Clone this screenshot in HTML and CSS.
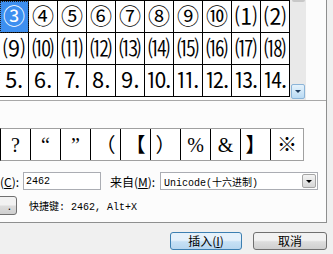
FILE: index.html
```html
<!DOCTYPE html>
<html lang="zh-CN">
<head>
    <meta charset="UTF-8">
    <title>符号</title>
    <link rel="stylesheet" href="styles.css">
</head>
<body>
    <div class="dialog">
        <div class="page">
            <div class="chars">
                <div class="grid">
                    <div class="cell selected">③</div>
                    <div class="cell">④</div>
                    <div class="cell">⑤</div>
                    <div class="cell">⑥</div>
                    <div class="cell">⑦</div>
                    <div class="cell">⑧</div>
                    <div class="cell">⑨</div>
                    <div class="cell">⑩</div>
                    <div class="cell">⑴</div>
                    <div class="cell">⑵</div>
                    <div class="cell">⑼</div>
                    <div class="cell">⑽</div>
                    <div class="cell">⑾</div>
                    <div class="cell">⑿</div>
                    <div class="cell">⒀</div>
                    <div class="cell">⒁</div>
                    <div class="cell">⒂</div>
                    <div class="cell">⒃</div>
                    <div class="cell">⒄</div>
                    <div class="cell">⒅</div>
                    <div class="cell">⒌</div>
                    <div class="cell">⒍</div>
                    <div class="cell">⒎</div>
                    <div class="cell">⒏</div>
                    <div class="cell">⒐</div>
                    <div class="cell">⒑</div>
                    <div class="cell">⒒</div>
                    <div class="cell">⒓</div>
                    <div class="cell">⒔</div>
                    <div class="cell">⒕</div>
                </div>
                <div class="vscroll">
                    <div class="thumb-end"></div>
                    <div class="arrow-down"><span class="tri"></span></div>
                </div>
            </div>

            <div class="recent">
                <div class="rcell">?</div>
                <div class="rcell">“</div>
                <div class="rcell">”</div>
                <div class="rcell">（</div>
                <div class="rcell">【</div>
                <div class="rcell">）</div>
                <div class="rcell">%</div>
                <div class="rcell">&amp;</div>
                <div class="rcell">】</div>
                <div class="rcell">※</div>
            </div>

            <div class="form-row code-row">
                <label class="lbl lbl-code" for="code">(<u>C</u>):</label>
                <input class="code-input" id="code" type="text" value="2462">
                <label class="lbl lbl-from">来自(<u>M</u>):</label>
                <div class="select">
                    <span class="select-text">Unicode(十六进制)</span>
                    <span class="drop"><span class="tri"></span></span>
                </div>
            </div>

            <div class="form-row key-row">
                <button class="btn-cut">.</button>
                <span class="shortcut">快捷键: 2462, Alt+X</span>
            </div>
        </div>

        <div class="footer">
            <button class="btn default">插入(<u>I</u>)</button>
            <button class="btn">取消</button>
        </div>
    </div>
</body>
</html>
```

FILE: styles.css
```css
html, body {
    margin: 0;
    padding: 0;
}
body {
    width: 333px;
    height: 254px;
    overflow: hidden;
    background-color: #f0f0f0;
    font-family: "Noto Sans CJK SC", sans-serif;
    font-size: 12px;
    color: #000;
}
.dialog {
    display: flex;
    flex-direction: column;
    height: 254px;
}
.page {
    width: 326px;
    height: 222px;
    background-color: #fcfcfc;
    border-right: 1px solid #8e8f8f;
    border-bottom: 1px solid #8e8f8f;
}

/* symbol grid */
.chars {
    display: flex;
    height: 100px;
    border-bottom: 1px solid #a8a8a8;
}
.grid {
    display: grid;
    grid-template-columns: repeat(10, 29px);
    grid-auto-rows: 32px;
    border-top: 1px solid #000;
    background-color: #fff;
}
.cell {
    border-right: 1px solid #000;
    border-bottom: 1px solid #000;
    display: flex;
    align-items: center;
    justify-content: center;
    font-family: "Liberation Serif", "Noto Sans CJK SC", serif;
    font-size: 22px;
    line-height: 1;
}
.cell.selected {
    background-color: #3d8ff0;
    color: #fff;
    outline: 1px dotted #222;
    outline-offset: -1px;
}
.vscroll {
    width: 16px;
    background-color: #e9e9e9;
    display: flex;
    flex-direction: column;
    align-items: center;
}
.thumb-end {
    width: 13px;
    height: 2px;
    background-color: #c8c8c8;
    border-radius: 0 0 2px 2px;
}
.arrow-down {
    margin-top: auto;
    margin-bottom: 1px;
    width: 12px;
    height: 13px;
    border: 1px solid #8bb4d8;
    border-radius: 2px;
    background: linear-gradient(#e6f3fc, #b9daf3);
    display: flex;
    align-items: center;
    justify-content: center;
}
.tri {
    width: 0;
    height: 0;
    border-left: 3px solid transparent;
    border-right: 3px solid transparent;
    border-top: 3px solid #1f3a5a;
}

/* recently used */
.recent {
    display: flex;
    width: 302px;
    margin-top: 27px;
    border: 1px solid #a0a0a0;
    border-left-color: #000;
    background-color: #fff;
}
.rcell {
    width: 29px;
    height: 31px;
    border-right: 1px solid #000;
    display: flex;
    align-items: center;
    justify-content: center;
    font-family: "Liberation Serif", "Noto Sans CJK SC", serif;
    font-size: 20px;
    line-height: 1;
}
.rcell:last-child {
    border-right: none;
    width: 32px;
}

/* code fields */
.form-row {
    display: flex;
    align-items: center;
}
.code-row {
    margin-top: 11px;
    height: 18px;
}
.lbl {
    white-space: nowrap;
}
.lbl-code {
    width: 23px;
}
.lbl-from {
    margin-left: 9px;
    width: 50px;
}
.code-input {
    box-sizing: border-box;
    width: 78px;
    height: 18px;
    margin: 0;
    padding: 0 2px;
    border: 1px solid #abadb3;
    background-color: #fff;
    font-family: "Liberation Mono", "Noto Sans CJK SC", monospace;
    font-size: 10px;
    color: #000;
}
.select {
    box-sizing: border-box;
    width: 158px;
    height: 18px;
    border: 1px solid #abadb3;
    background-color: #fff;
    display: flex;
    align-items: center;
    padding-left: 3px;
}
.select-text {
    flex: 1;
    font-family: "Liberation Mono", "Noto Sans CJK SC", monospace;
    font-size: 10px;
}
.drop {
    width: 14px;
    height: 14px;
    margin-right: 1px;
    border: 1px solid #a5a5a5;
    border-radius: 2px;
    box-sizing: border-box;
    background: linear-gradient(#f4f4f4, #d6d6d6);
    display: flex;
    align-items: center;
    justify-content: center;
}
.drop .tri {
    border-top-color: #000;
}
.key-row {
    margin-top: 6px;
    height: 19px;
}
.btn-cut {
    box-sizing: border-box;
    width: 18px;
    height: 19px;
    margin: 0 0 0 -1px;
    padding: 0 5px 0 0;
    border: 1px solid #707070;
    border-radius: 0 3px 3px 0;
    background: linear-gradient(#f2f2f2 45%, #dcdcdc 55%, #cfcfcf);
    font-size: 12px;
    text-align: right;
}
.shortcut {
    margin-left: 12px;
    font-family: "Liberation Mono", "Noto Sans CJK SC", monospace;
    font-size: 10px;
}

/* buttons */
.footer {
    display: flex;
    justify-content: flex-end;
    gap: 11px;
    padding: 9px 6px 0 0;
}
.btn {
    box-sizing: border-box;
    width: 74px;
    height: 18px;
    margin: 0;
    padding: 0;
    border: 1px solid #707070;
    border-radius: 3px;
    background: linear-gradient(#f2f2f2 45%, #dddddd 55%, #cfcfcf);
    font-family: "Noto Sans CJK SC", sans-serif;
    font-size: 12px;
    line-height: 16px;
    color: #000;
}
.btn.default {
    width: 72px;
    border-color: #3c7fb1;
    background: linear-gradient(#e5f1fb 45%, #c6e0f5 55%, #b7d6ef);
}
```
